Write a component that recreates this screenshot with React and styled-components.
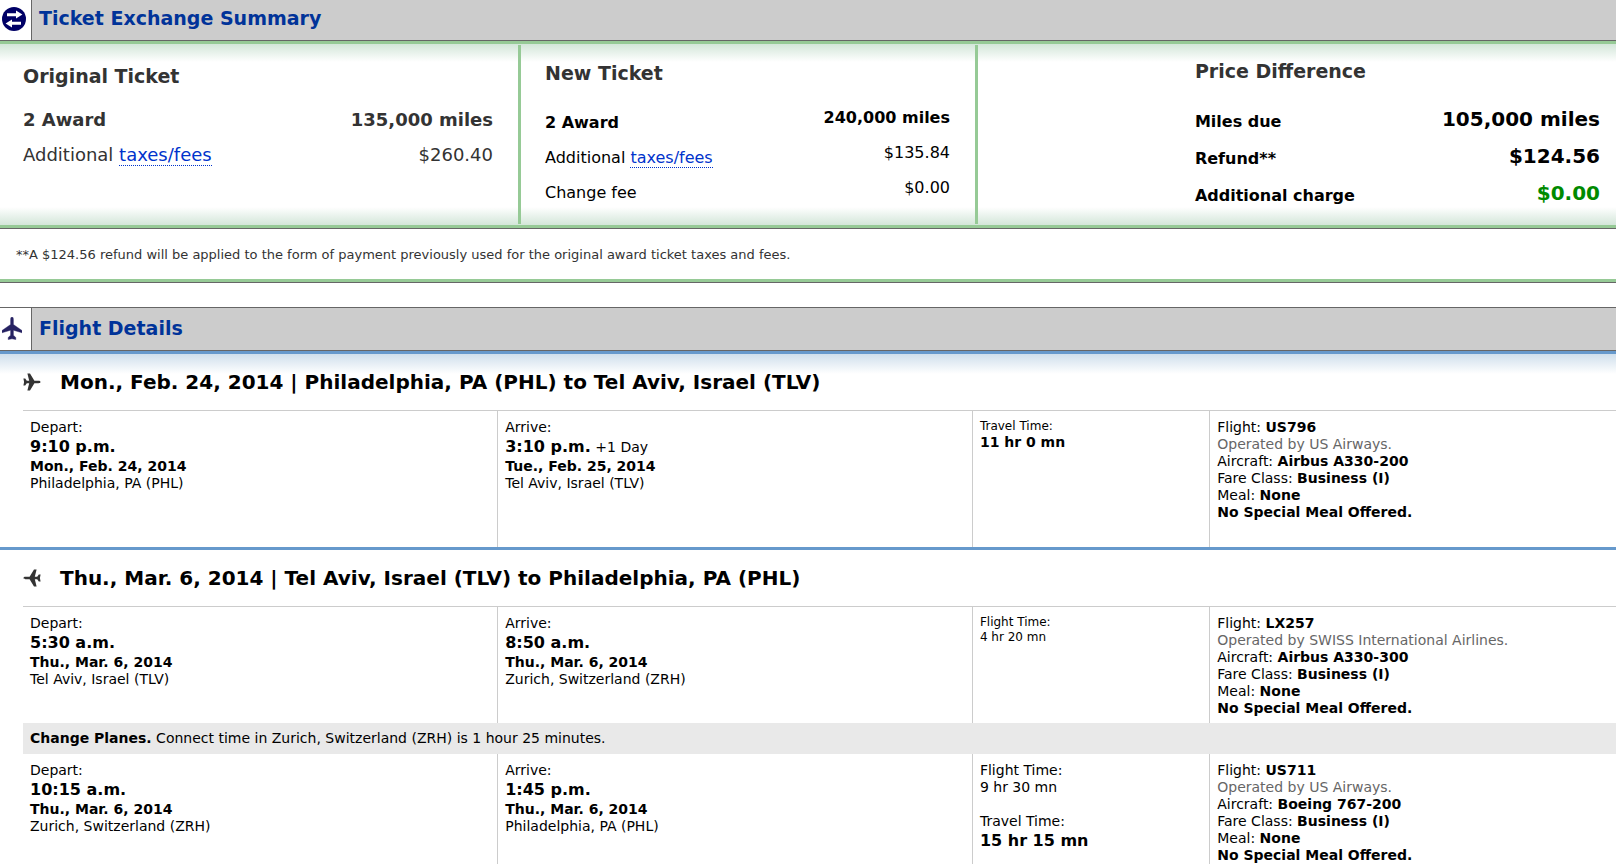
import React from 'react';
import styled, { createGlobalStyle } from 'styled-components';

const GlobalStyle = createGlobalStyle`
  *,
  *::before,
  *::after {
    box-sizing: border-box;
  }
  body {
    margin: 0;
    background: #fff;
    color: #000;
    font-family: Verdana, 'DejaVu Sans', sans-serif;
    font-size: 14px;
    line-height: 17px;
  }
  h2,
  h3,
  p {
    margin: 0;
  }
  table {
    border-collapse: collapse;
    border-spacing: 0;
  }
  th,
  td {
    padding: 0;
    text-align: left;
    vertical-align: top;
  }
`;

const SectionTitle = styled.h2`
  padding-left: 7px;
  color: #039;
  font-size: 19px;
  line-height: 37px;
`;

const SectionHeader = styled.header`
  display: flex;
  height: ${p => (p.$ruled ? '44px' : '41px')};
  background: #ccc;
  border-top: ${p => (p.$ruled ? '1px solid #666' : '0')};
  border-bottom: 1px solid #666;

  ${SectionTitle} {
    line-height: ${p => (p.$ruled ? '41px' : '37px')};
  }
`;

const IconBox = styled.div`
  display: flex;
  align-items: center;
  width: 32px;
  padding: 0 0 2px 2px;
  background: #fff;
  border-right: 1px solid #666;
`;

const SummaryPanel = styled.div`
  display: grid;
  grid-template-columns: 521fr 457fr 638fr;
  min-height: 187px;
  padding: 1px 0;
  border: solid #96ca96;
  border-width: 3px 0;
  background: linear-gradient(#d3e6d9, #fff 18px, #fff calc(100% - 18px), #d3e6d9);
`;

const Ticket = styled.section`
  padding: ${p => p.$pad};
  border-right: ${p => (p.$last ? '0' : '3px solid #96ca96')};
  color: ${p => (p.$muted ? '#333' : '#000')};
`;

const TicketTitle = styled.h3`
  color: #333;
  font-size: 19px;
  line-height: 24px;
`;

const PriceTable = styled.table`
  width: 100%;
  margin-top: ${p => p.$gap};
  font-size: ${p => p.$size};
  line-height: 24px;

  tr {
    height: ${p => p.$row};
  }
  th {
    padding-top: ${p => p.$drop};
    font-weight: normal;
  }
  td {
    text-align: right;
    font-size: ${p => p.$amount};
  }
`;

const PriceRow = styled.tr`
  && th,
  td {
    font-weight: ${p => (p.$bold ? 'bold' : 'normal')};
  }
  td {
    color: ${p => (p.$good ? '#008a00' : 'inherit')};
  }
`;

const TermLink = styled.a`
  color: #03c;
  text-decoration: none;
  border-bottom: 1px dotted #03c;
`;

const Footnote = styled.p`
  padding: 17px 16px 16px;
  border-top: 1px solid #666;
  border-bottom: 3px solid #96ca96;
  color: #333;
  font-size: 13px;
`;

const SummarySection = styled.section`
  margin-bottom: 24px;
  border-bottom: 1px solid #666;
`;

const Trip = styled.section`
  padding-left: 23px;
  border-top: 3px solid #69c;
  background: ${p => (p.$shaded ? 'linear-gradient(#cfdfec, #fff 20px)' : '#fff')};
`;

const TripTitle = styled.h3`
  display: flex;
  align-items: center;
  gap: 19px;
  font-size: 20px;
  line-height: 56px;
`;

const LegTable = styled.table`
  width: 100%;
  table-layout: fixed;
  border-top: 1px solid #ccc;
`;

const PlaceCol = styled.col`
  width: 29.8%;
`;

const TimeCol = styled.col`
  width: 14.9%;
`;

const LegRow = styled.tr`
  height: ${p => p.$height};

  td {
    padding: 8px 7px 0;
  }
  td + td {
    border-left: 1px solid #ccc;
  }
`;

const Time = styled.div`
  line-height: 21px;

  b {
    font-size: 16px;
  }
`;

const Small = styled.div`
  font-size: 12px;
  line-height: 15px;
`;

const TotalTime = styled.div`
  margin-top: 17px;
`;

const Muted = styled.div`
  color: #666;
`;

const ConnectionCell = styled.td`
  height: 31px;
  padding: 7px;
  background: #e9e9e9;
`;

const PLANE =
  'M10 0C11 0 11.4 1 11.4 2.5V7.5L20 13.5V15.8L11.4 13.2V18.2L13.8 20.5V22.6L10 21.8L6.2 22.6V20.5L8.6 18.2V13.2L0 15.8V13.5L8.6 7.5V2.5C8.6 1 9 0 10 0Z';

const ExchangeIcon = () => (
  <svg width="24" height="24" viewBox="0 0 24 24" aria-hidden="true">
    <circle cx="12" cy="12" r="12" fill="#006" />
    <path
      d="M5 6.2H14V3.6L20.4 7.6L14 11.6V9.2H5ZM19 17.8H10V20.4L3.6 16.4L10 12.4V14.8H19Z"
      fill="#fff"
    />
  </svg>
);

const PlaneIcon = () => (
  <svg width="20" height="23" viewBox="0 0 20 23" aria-hidden="true">
    <path d={PLANE} fill="#262262" stroke="#262262" strokeWidth=".4" />
  </svg>
);

// the small plane points right on the way out and left on the way back
const TripIcon = ({ back }) => (
  <svg width="18" height="18" viewBox="0 0 18 18" aria-hidden="true">
    <path
      d="M17.5 9C17.5 9.8 16.6 10.2 15.5 10.2H11.4L7 17.5H4.4L6.2 10.2H3.8L2.2 12.4H.4L1.1 9L.4 5.6H2.2L3.8 7.8H6.2L4.4 .5H7L11.4 7.8H15.5C16.6 7.8 17.5 8.2 17.5 9Z"
      fill="#333"
      transform={back ? 'matrix(-1 0 0 1 18 0)' : undefined}
    />
  </svg>
);

const Taxes = () => (
  <>
    Additional <TermLink href="#taxes">taxes/fees</TermLink>
  </>
);

const tickets = [
  {
    title: 'Original Ticket',
    pad: '19px 25px 0 23px',
    muted: true,
    table: { $gap: '20px', $row: '35px', $size: '18px', $amount: '18px', $drop: '0' },
    rows: [
      { label: '2 Award', amount: '135,000 miles', bold: true },
      { label: <Taxes />, amount: '$260.40' },
    ],
  },
  {
    title: 'New Ticket',
    pad: '16px 25px 0 24px',
    table: { $gap: '21px', $row: '35px', $size: '16px', $amount: '16px', $drop: '5px' },
    rows: [
      { label: '2 Award', amount: '240,000 miles', bold: true },
      { label: <Taxes />, amount: '$135.84' },
      { label: 'Change fee', amount: '$0.00' },
    ],
  },
  {
    title: 'Price Difference',
    pad: '14px 16px 0 34%',
    last: true,
    table: { $gap: '24px', $row: '37px', $size: '16px', $amount: '20px', $drop: '3px' },
    rows: [
      { label: 'Miles due', amount: '105,000 miles', bold: true },
      { label: 'Refund**', amount: '$124.56', bold: true },
      { label: 'Additional charge', amount: '$0.00', bold: true, good: true },
    ],
  },
];

const Place = ({ label, time, note, date, city }) => (
  <td>
    <div>{label}</div>
    <Time>
      <b>{time}</b> {note}
    </Time>
    <div>
      <b>{date}</b>
    </div>
    <div>{city}</div>
  </td>
);

const Flight = ({ number, operator, aircraft }) => (
  <td>
    <div>
      Flight: <b>{number}</b>
    </div>
    <Muted>Operated by {operator}.</Muted>
    <div>
      Aircraft: <b>{aircraft}</b>
    </div>
    <div>
      Fare Class: <b>Business (I)</b>
    </div>
    <div>
      Meal: <b>None</b>
    </div>
    <div>
      <b>No Special Meal Offered.</b>
    </div>
  </td>
);

const Legs = ({ children }) => (
  <LegTable>
    <colgroup>
      <PlaceCol />
      <PlaceCol />
      <TimeCol />
      <col />
    </colgroup>
    <tbody>{children}</tbody>
  </LegTable>
);

const App = () => (
  <>
    <GlobalStyle />
    <main>
      <SummarySection>
        <SectionHeader>
          <IconBox>
            <ExchangeIcon />
          </IconBox>
          <SectionTitle>Ticket Exchange Summary</SectionTitle>
        </SectionHeader>
        <SummaryPanel>
          {tickets.map(({ title, pad, muted, last, table, rows }) => (
            <Ticket key={title} $pad={pad} $muted={muted} $last={last}>
              <TicketTitle>{title}</TicketTitle>
              <PriceTable {...table}>
                <tbody>
                  {rows.map(({ label, amount, bold, good }) => (
                    <PriceRow key={amount} $bold={bold} $good={good}>
                      <th scope="row">{label}</th>
                      <td>{amount}</td>
                    </PriceRow>
                  ))}
                </tbody>
              </PriceTable>
            </Ticket>
          ))}
        </SummaryPanel>
        <Footnote>
          **A $124.56 refund will be applied to the form of payment previously
          used for the original award ticket taxes and fees.
        </Footnote>
      </SummarySection>

      <SectionHeader $ruled>
        <IconBox>
          <PlaneIcon />
        </IconBox>
        <SectionTitle>Flight Details</SectionTitle>
      </SectionHeader>

      <Trip $shaded>
        <TripTitle>
          <TripIcon />
          Mon., Feb. 24, 2014 | Philadelphia, PA (PHL) to Tel Aviv, Israel (TLV)
        </TripTitle>
        <Legs>
          <LegRow $height="136px">
            <Place
              label="Depart:"
              time="9:10 p.m."
              date="Mon., Feb. 24, 2014"
              city="Philadelphia, PA (PHL)"
            />
            <Place
              label="Arrive:"
              time="3:10 p.m."
              note="+1 Day"
              date="Tue., Feb. 25, 2014"
              city="Tel Aviv, Israel (TLV)"
            />
            <td>
              <Small>Travel Time:</Small>
              <b>11 hr 0 mn</b>
            </td>
            <Flight number="US796" operator="US Airways" aircraft="Airbus A330-200" />
          </LegRow>
        </Legs>
      </Trip>

      <Trip>
        <TripTitle>
          <TripIcon back />
          Thu., Mar. 6, 2014 | Tel Aviv, Israel (TLV) to Philadelphia, PA (PHL)
        </TripTitle>
        <Legs>
          <LegRow $height="117px">
            <Place
              label="Depart:"
              time="5:30 a.m."
              date="Thu., Mar. 6, 2014"
              city="Tel Aviv, Israel (TLV)"
            />
            <Place
              label="Arrive:"
              time="8:50 a.m."
              date="Thu., Mar. 6, 2014"
              city="Zurich, Switzerland (ZRH)"
            />
            <td>
              <Small>Flight Time:</Small>
              <Small>4 hr 20 mn</Small>
            </td>
            <Flight
              number="LX257"
              operator="SWISS International Airlines"
              aircraft="Airbus A330-300"
            />
          </LegRow>
          <tr>
            <ConnectionCell colSpan={4}>
              <b>Change Planes.</b> Connect time in Zurich, Switzerland (ZRH) is
              1 hour 25 minutes.
            </ConnectionCell>
          </tr>
          <LegRow $height="110px">
            <Place
              label="Depart:"
              time="10:15 a.m."
              date="Thu., Mar. 6, 2014"
              city="Zurich, Switzerland (ZRH)"
            />
            <Place
              label="Arrive:"
              time="1:45 p.m."
              date="Thu., Mar. 6, 2014"
              city="Philadelphia, PA (PHL)"
            />
            <td>
              <div>Flight Time:</div>
              <div>9 hr 30 mn</div>
              <TotalTime>Travel Time:</TotalTime>
              <Time>
                <b>15 hr 15 mn</b>
              </Time>
            </td>
            <Flight number="US711" operator="US Airways" aircraft="Boeing 767-200" />
          </LegRow>
        </Legs>
      </Trip>
    </main>
  </>
);

export default App;
